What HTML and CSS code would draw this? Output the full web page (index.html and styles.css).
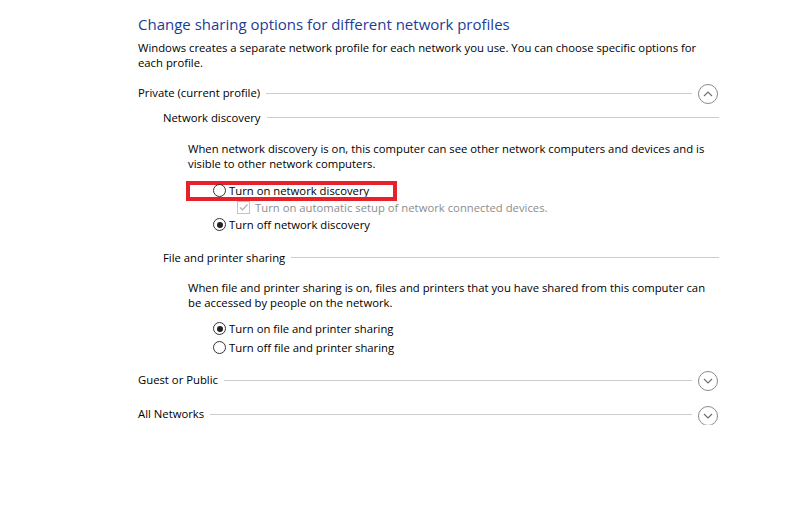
FILE: index.html
```html
<!DOCTYPE html>
<html>
<head>
<meta charset="utf-8">
<link rel="stylesheet" href="styles.css">
</head>
<body>
<div class="page">
  <h1 class="title">Change sharing options for different network profiles</h1>
  <p class="intro">Windows creates a separate network profile for each network you use. You can choose specific options for each profile.</p>

  <section class="profile">
    <div class="profile-head">
      <span class="profile-name">Private (current profile)</span>
      <span class="rule"></span>
      <span class="toggle"><svg width="22" height="22" viewBox="0 0 22 22"><circle cx="11" cy="11" r="9.5" fill="none" stroke="#8a8a8a" stroke-width="1"/><path d="M7 13 L11 9 L15 13" fill="none" stroke="#707070" stroke-width="1.2"/></svg></span>
    </div>

    <div class="group">
      <div class="group-head">
        <span class="group-name">Network discovery</span>
        <span class="rule"></span>
      </div>
      <div class="group-body">
        <p class="desc">When network discovery is on, this computer can see other network computers and devices and is visible to other network computers.</p>
        <div class="options">
          <div class="option highlight"><span class="radio"></span><span>Turn on network discovery</span></div>
          <div class="option sub disabled"><span class="check"><svg width="11" height="11" viewBox="0 0 11 11"><path d="M2 5.5 L4.5 8 L9.5 2.5" fill="none" stroke="#b0b0b0" stroke-width="1.2"/></svg></span><span>Turn on automatic setup of network connected devices.</span></div>
          <div class="option"><span class="radio on"></span><span>Turn off network discovery</span></div>
        </div>
      </div>
    </div>

    <div class="group">
      <div class="group-head">
        <span class="group-name">File and printer sharing</span>
        <span class="rule"></span>
      </div>
      <div class="group-body">
        <p class="desc second">When file and printer sharing is on, files and printers that you have shared from this computer can be accessed by people on the network.</p>
        <div class="options wide">
          <div class="option"><span class="radio on"></span><span>Turn on file and printer sharing</span></div>
          <div class="option"><span class="radio"></span><span>Turn off file and printer sharing</span></div>
        </div>
      </div>
    </div>
  </section>

  <section class="profile collapsed first-collapsed">
    <div class="profile-head">
      <span class="profile-name">Guest or Public</span>
      <span class="rule"></span>
      <span class="toggle"><svg width="22" height="22" viewBox="0 0 22 22"><circle cx="11" cy="11" r="9.5" fill="none" stroke="#8a8a8a" stroke-width="1"/><path d="M7 9 L11 13 L15 9" fill="none" stroke="#707070" stroke-width="1.2"/></svg></span>
    </div>
  </section>

  <section class="profile collapsed">
    <div class="profile-head">
      <span class="profile-name">All Networks</span>
      <span class="rule"></span>
      <span class="toggle down"><svg width="22" height="22" viewBox="0 0 22 22"><circle cx="11" cy="11" r="9.5" fill="none" stroke="#8a8a8a" stroke-width="1"/><path d="M7 9 L11 13 L15 9" fill="none" stroke="#707070" stroke-width="1.2"/></svg></span>
    </div>
  </section>
</div>
</body>
</html>
```
FILE: styles.css
```css
html, body {
  margin: 0;
  padding: 0;
  background: #ffffff;
}
body {
  font-family: "Open Sans", "Noto Sans", sans-serif;
  font-size: 11.3px;
  color: #000000;
}
.page {
  width: 581px;
  padding: 12px 0 0 138px;
}
.title {
  margin: 0;
  font-size: 15px;
  font-weight: 400;
  color: #1e3c96;
  line-height: 24px;
}
.intro {
  margin: 4px 0 0;
  line-height: 15px;
  width: 570px;
}
.profile {
  margin-top: 12px;
}
.profile.collapsed {
  margin-top: 12px;
}
.profile.first-collapsed {
  margin-top: 2px;
}
.profile-head {
  display: flex;
  align-items: center;
  height: 22px;
}
.profile-name {
  position: relative;
  top: -1px;
}
.toggle {
  display: flex;
  width: 22px;
  height: 22px;
  position: relative;
  top: 1px;
}
.toggle.down {
  top: 2px;
}
.rule {
  flex: 1;
  border-top: 1px solid #cccccc;
  margin: 0 5px 0 6px;
}
.group {
  padding-left: 25px;
}
.group-head {
  display: flex;
  align-items: center;
  height: 16px;
  margin-top: 5px;
}
.group-head .rule {
  margin-right: 0;
}
.group-body {
  padding-left: 25px;
}
.desc {
  margin: 16px 0 0;
  line-height: 15px;
}
.desc.second {
  margin-top: 15px;
}
.options {
  padding-left: 25px;
  margin-top: 11px;
  padding-bottom: 11px;
}
.options.wide {
  margin-top: 9px;
  padding-bottom: 10px;
}
.option {
  display: flex;
  align-items: center;
  height: 17px;
  gap: 3px;
}
.options.wide .option {
  height: 19px;
}
.option.sub {
  padding-left: 24px;
  gap: 5px;
}
.option.disabled {
  color: #8d8d8d;
}
.highlight {
  position: relative;
}
.highlight::before {
  content: "";
  position: absolute;
  left: -27px;
  top: -1px;
  width: 203px;
  height: 12px;
  border: 4px solid #e8202a;
}
.radio {
  width: 11px;
  height: 11px;
  border: 1px solid #333333;
  border-radius: 50%;
  box-sizing: content-box;
  position: relative;
  flex: none;
}
.radio.on::after {
  content: "";
  position: absolute;
  left: 2.5px;
  top: 2.5px;
  width: 6px;
  height: 6px;
  border-radius: 50%;
  background: #222222;
}
.check {
  width: 11px;
  height: 11px;
  border: 1px solid #c4c4c4;
  display: flex;
  flex: none;
}
```
